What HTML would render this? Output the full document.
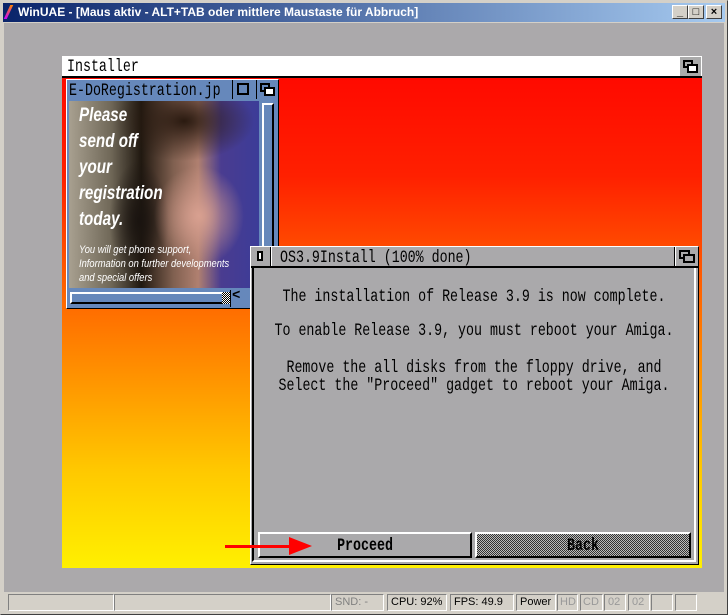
<!DOCTYPE html>
<html><head><meta charset="utf-8"><style>
*{margin:0;padding:0;box-sizing:border-box}
body{width:728px;height:615px;overflow:hidden;background:#d4d0c8;position:relative;font-family:"Liberation Sans",sans-serif}
.abs{position:absolute}
.am{font-family:"Liberation Mono",monospace;font-size:13.3px;color:#000;white-space:pre;display:inline-block;transform:scaleY(1.3);transform-origin:0 50%}
.tb{left:3px;top:3px;width:722px;height:19px;background:linear-gradient(90deg,#0a246a,#a6caf0)}
.wb{top:5px;width:16px;height:14px;background:#d4d0c8;border:1px solid;border-color:#fff #404040 #404040 #fff;font-size:11px;font-weight:bold;text-align:center;line-height:12px;color:#000}
.cell{top:594px;height:17px;border:1px solid;border-color:#808080 #fff #fff #808080;font-size:11px;line-height:15px;padding-left:4px;color:#000}
.it{position:absolute;color:#fff;font-family:"Liberation Sans Narrow","Liberation Sans",sans-serif;font-style:italic;white-space:nowrap;transform-origin:0 0}
</style></head><body>
<div class="abs" style="left:0;top:0;width:728px;height:615px;border:1px solid;border-color:#d4d0c8 #404040 #404040 #d4d0c8"></div>
<div class="abs tb"></div>
<div class="abs" style="left:7px;top:5px;width:3px;height:14px;background:linear-gradient(#f80,#c0f);transform:skewX(-25deg)"></div>
<div class="abs" style="left:18px;top:4px;color:#fff;font-weight:bold;font-size:12px;line-height:17px">WinUAE - [Maus aktiv - ALT+TAB oder mittlere Maustaste für Abbruch]</div>
<div class="abs wb" style="left:672px">_</div>
<div class="abs wb" style="left:688px">□</div>
<div class="abs wb" style="left:706px">×</div>
<div class="abs" style="left:4px;top:23px;width:720px;height:569px;background:#aba9ab"></div>
<div class="abs" style="left:62px;top:56px;width:640px;height:20px;background:#fff"></div>
<div class="abs" style="left:67px;top:56px;line-height:20px"><span class="am">Installer</span></div>
<div class="abs" style="left:680px;top:57px;width:21px;height:19px;background:#aaa"><div class="abs" style="left:3px;top:3px;width:10px;height:8px;border:2px solid #000"></div><div class="abs" style="left:7px;top:7px;width:11px;height:9px;border:2px solid #000;background:#fff"></div></div>
<div class="abs" style="left:62px;top:76px;width:640px;height:2px;background:#000"></div>
<div class="abs" style="left:62px;top:78px;width:640px;height:490px;background:linear-gradient(#ff0a00 0%,#ff2000 20%,#ff5a00 40%,#ff9000 60%,#ffc800 80%,#fff000 100%)"></div>
<div class="abs" style="left:66px;top:79px;width:213px;height:230px;background:#6688bb;border:1px solid #fff;border-right-color:#000;border-bottom-color:#000"></div>
<div class="abs" style="left:69px;top:80px;line-height:19px"><span class="am">E-DoRegistration.jp</span></div>
<div class="abs" style="left:232px;top:80px;width:1px;height:19px;background:#000"></div>
<div class="abs" style="left:237px;top:83px;width:12px;height:12px;border:2px solid #000"></div>
<div class="abs" style="left:256px;top:80px;width:1px;height:19px;background:#000"></div>
<div class="abs" style="left:260px;top:83px;width:10px;height:9px;border:2px solid #000"></div>
<div class="abs" style="left:264px;top:87px;width:11px;height:9px;border:2px solid #000;background:#fff"></div>
<div class="abs" style="left:69px;top:101px;width:190px;height:187px;overflow:hidden;background:
radial-gradient(ellipse 45px 50px at 130px 115px,#d8a090,rgba(200,150,130,0) 100%),
radial-gradient(ellipse 70px 40px at 115px 20px,#2a1a10,rgba(40,25,15,0) 100%),
radial-gradient(ellipse 30px 60px at 70px 120px,#1a1410,rgba(20,15,10,0) 100%),
linear-gradient(90deg,#a8a090 0%,#706858 22%,#201810 38%,#806050 55%,#b08070 68%,#4a3c90 80%,#3c3c98 100%)">
<div class="it" style="left:-10px;top:2px;font-weight:bold;font-size:19px;line-height:26px;transform:scaleX(0.8);left:10px">Please<br>send off<br>your<br>registration<br>today.</div>
<div class="it" style="left:10px;top:142px;font-size:11px;line-height:14px;transform:scaleX(0.85)">You will get phone support,<br>Information on further developments<br>and special offers</div>
</div>
<div class="abs" style="left:262px;top:103px;width:12px;height:160px;border:2px solid #fff;border-right-color:#000;border-bottom-color:#000;background:#6688bb"></div>
<div class="abs" style="left:263px;top:264px;width:10px;height:10px;background:repeating-conic-gradient(#000 0 25%,#fff 0 50%) 0 0/2px 2px"></div>
<div class="abs" style="left:70px;top:292px;width:158px;height:12px;border:2px solid #fff;border-right-color:#000;border-bottom-color:#000;background:#6688bb"></div>
<div class="abs" style="left:222px;top:292px;width:8px;height:12px;background:repeating-conic-gradient(#000 0 25%,#fff 0 50%) 0 0/2px 2px"></div>
<div class="abs" style="left:230px;top:290px;width:1px;height:17px;background:#000"></div>
<div class="abs" style="left:232px;top:288px;font:bold 14px 'Liberation Mono',monospace">&lt;</div>
<div class="abs" style="left:250px;top:246px;width:449px;height:319px;background:#aaa9ab;border:1px solid;border-color:#fff #000 #000 #fff"></div>
<div class="abs" style="left:251px;top:266px;width:447px;height:2px;background:#000"></div>
<div class="abs" style="left:270px;top:247px;width:1px;height:19px;background:#000"></div>
<div class="abs" style="left:271px;top:247px;width:1px;height:19px;background:#fff"></div>
<div class="abs" style="left:257px;top:251px;width:6px;height:10px;border:2px solid #000;background:#fff"></div>
<div class="abs" style="left:280px;top:247px;line-height:19px"><span class="am">OS3.9Install (100% done)</span></div>
<div class="abs" style="left:674px;top:247px;width:1px;height:19px;background:#000"></div>
<div class="abs" style="left:675px;top:247px;width:1px;height:19px;background:#fff"></div>
<div class="abs" style="left:679px;top:250px;width:11px;height:9px;border:2px solid #000"></div>
<div class="abs" style="left:683px;top:254px;width:12px;height:9px;border:2px solid #000;background:#aaa9ab"></div>
<div class="abs" style="left:252px;top:268px;width:444px;height:294px;border:2px solid;border-color:#000 #fff #fff #000;border-top:0"></div>
<div class="abs" style="left:254px;top:288px;width:440px;text-align:center;line-height:16px"><span class="am">The installation of Release 3.9 is now complete.</span></div>
<div class="abs" style="left:254px;top:322px;width:440px;text-align:center;line-height:16px"><span class="am">To enable Release 3.9, you must reboot your Amiga.</span></div>
<div class="abs" style="left:254px;top:359px;width:440px;text-align:center;line-height:16px"><span class="am">Remove the all disks from the floppy drive, and</span></div>
<div class="abs" style="left:254px;top:377px;width:440px;text-align:center;line-height:16px"><span class="am">Select the "Proceed" gadget to reboot your Amiga.</span></div>
<div class="abs" style="left:258px;top:532px;width:214px;height:26px;border:2px solid;border-color:#fff #000 #000 #fff;text-align:center;line-height:22px"><span class="am" style="font-weight:bold">Proceed</span></div>
<div class="abs" style="left:475px;top:532px;width:216px;height:26px;border:2px solid;border-color:#fff #000 #000 #fff;background:repeating-conic-gradient(#333 0 25%,#bbb 0 50%) 0 0/2px 2px;text-align:center;line-height:22px"><span class="am" style="font-weight:bold">Back</span></div>
<div class="abs" style="left:225px;top:545px;width:70px;height:3px;background:#f00"></div>
<div class="abs" style="left:289px;top:537px;width:0;height:0;border-left:23px solid #f00;border-top:9px solid transparent;border-bottom:9px solid transparent"></div>
<div class="abs cell" style="left:8px;width:106px"></div>
<div class="abs cell" style="left:114px;width:217px"></div>
<div class="abs cell" style="left:331px;width:53px;color:#808080;padding-left:3px">SND: -</div>
<div class="abs cell" style="left:387px;width:60px;padding-left:3px">CPU: 92%</div>
<div class="abs cell" style="left:450px;width:64px;padding-left:3px">FPS: 49.9</div>
<div class="abs cell" style="left:516px;width:40px;padding-left:3px">Power</div>
<div class="abs cell" style="left:557px;width:21px;color:#999;padding-left:2px">HD</div>
<div class="abs cell" style="left:580px;width:23px;color:#999;padding-left:2px">CD</div>
<div class="abs cell" style="left:604px;width:22px;color:#999;padding-left:3px">02</div>
<div class="abs cell" style="left:628px;width:22px;color:#999;padding-left:3px">02</div>
<div class="abs cell" style="left:651px;width:22px"></div>
<div class="abs cell" style="left:675px;width:22px"></div>
</body></html>
